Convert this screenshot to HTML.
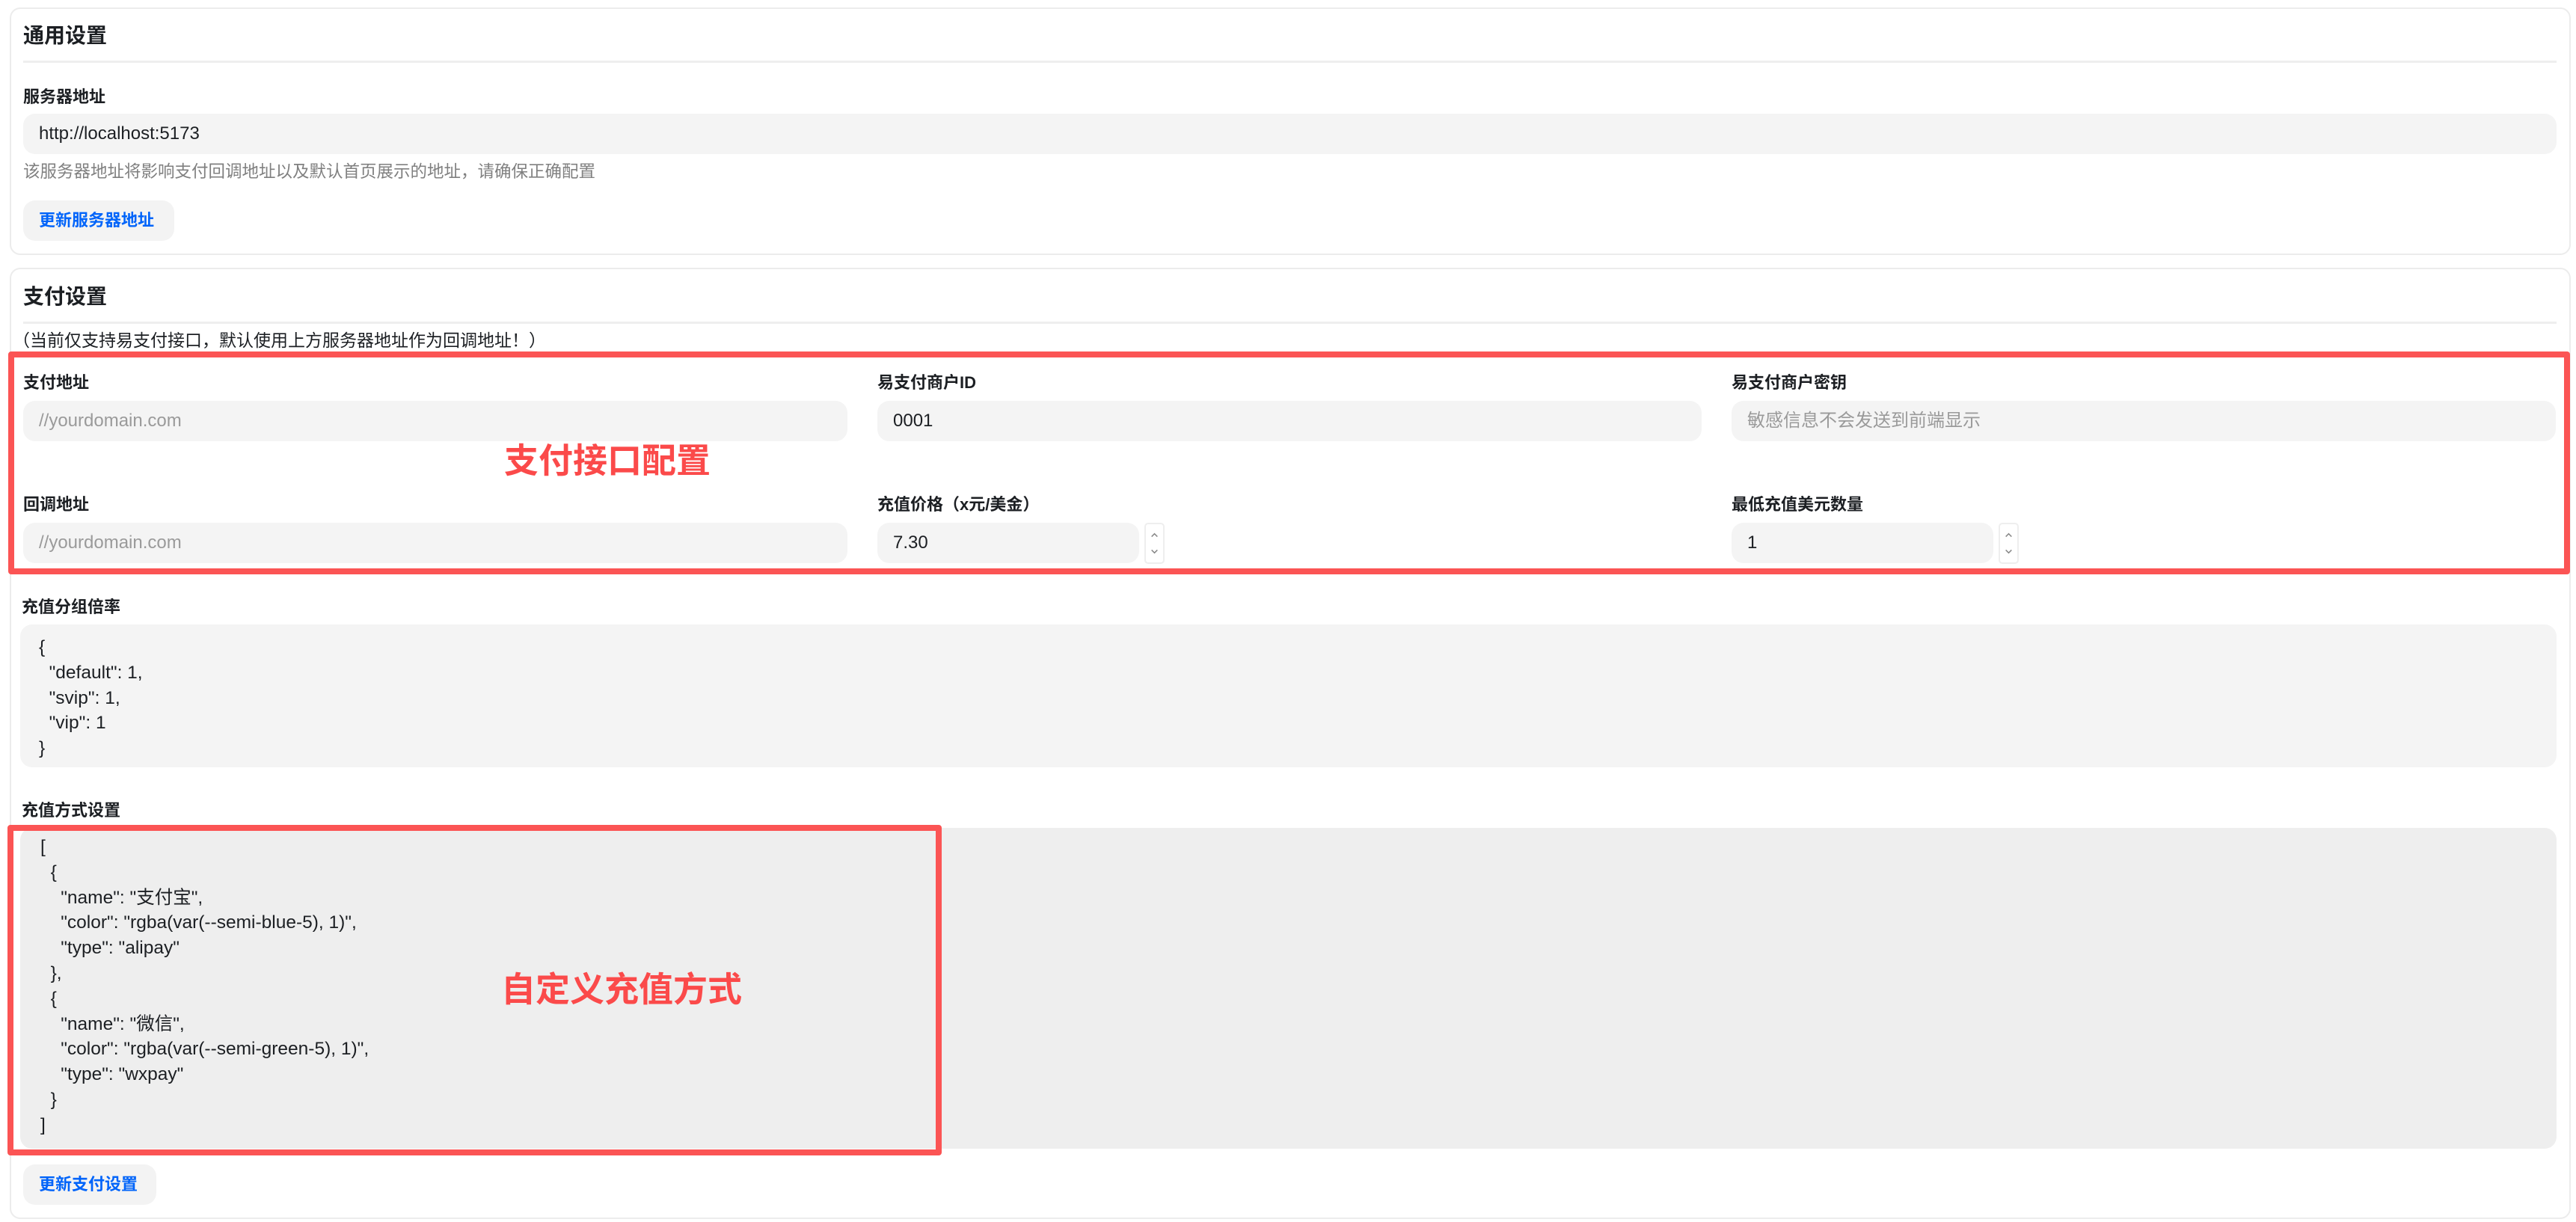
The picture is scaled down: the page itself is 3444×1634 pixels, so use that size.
<!DOCTYPE html>
<html><head><meta charset="utf-8"><style>
*{box-sizing:border-box;margin:0;padding:0}
body{width:3444px;height:1634px;background:#fff;font-family:"Liberation Sans","Noto Sans CJK SC",sans-serif;color:#1c1f23;position:relative;overflow:hidden}
.a{position:absolute}
.card{position:absolute;left:13px;width:3424px;border:2px solid #ececec;border-radius:14px;background:#fff}
.title{font-size:28px;font-weight:700;line-height:36px}
.div{height:3px;background:#eeeeee;width:3387px;left:31px}
.lbl{font-size:22px;font-weight:700;line-height:28px}
.inp{background:#f4f4f4;border-radius:16px;font-size:24px;line-height:54px;padding-left:21px;height:54px}
.ph{color:#9a9a9a}
.btn{background:#f3f3f3;border-radius:16px;color:#0064fa;font-weight:700;font-size:22px;line-height:54px;height:54px;padding-left:21px}
.red{border:8px solid #fb5454;border-radius:4px}
.rt{color:#fb4a4a;font-size:46px;line-height:50px;font-weight:700}
.code{font-size:24.5px;line-height:33.8px;white-space:pre}
.spin{border:2px solid #eee;border-radius:5px;width:27px;height:55px}
</style></head><body>
<div class="card" style="top:10px;height:331px"></div>
<div class="a title" style="left:31px;top:30px">通用设置</div>
<div class="a div" style="top:81px"></div>
<div class="a lbl" style="left:31px;top:116px">服务器地址</div>
<div class="a inp" style="left:31px;top:152px;width:3387px">http://localhost:5173</div>
<div class="a" style="left:31px;top:215px;font-size:22.5px;line-height:30px;color:#808080">该服务器地址将影响支付回调地址以及默认首页展示的地址，请确保正确配置</div>
<div class="a btn" style="left:31px;top:268px;width:202px">更新服务器地址</div>

<div class="card" style="top:358px;height:1272px"></div>
<div class="a title" style="left:31px;top:379px">支付设置</div>
<div class="a div" style="top:430px"></div>
<div class="a" style="left:17px;top:440px;font-size:23px;line-height:30px">（当前仅支持易支付接口，默认使用上方服务器地址作为回调地址！）</div>

<div class="a lbl" style="left:31px;top:498px">支付地址</div>
<div class="a lbl" style="left:1173px;top:498px">易支付商户ID</div>
<div class="a lbl" style="left:2315px;top:498px">易支付商户密钥</div>
<div class="a inp ph" style="left:31px;top:536px;width:1102px">//yourdomain.com</div>
<div class="a inp" style="left:1173px;top:536px;width:1102px">0001</div>
<div class="a inp ph" style="left:2315px;top:536px;width:1102px">敏感信息不会发送到前端显示</div>

<div class="a lbl" style="left:31px;top:661px">回调地址</div>
<div class="a lbl" style="left:1173px;top:661px">充值价格（x元/美金）</div>
<div class="a lbl" style="left:2315px;top:661px">最低充值美元数量</div>
<div class="a inp ph" style="left:31px;top:699px;width:1102px">//yourdomain.com</div>
<div class="a inp" style="left:1173px;top:699px;width:350px">7.30</div>
<svg class="a spin" style="left:1530px;top:699px" viewBox="0 0 27 55"><path d="M9 17 L13.5 12.5 L18 17 M9 38 L13.5 42.5 L18 38" fill="none" stroke="#888" stroke-width="1.8"/></svg>
<div class="a inp" style="left:2315px;top:699px;width:350px">1</div>
<svg class="a spin" style="left:2672px;top:699px" viewBox="0 0 27 55"><path d="M9 17 L13.5 12.5 L18 17 M9 38 L13.5 42.5 L18 38" fill="none" stroke="#888" stroke-width="1.8"/></svg>
<div class="a red" style="left:11px;top:470px;width:3425px;height:298px"></div>
<div class="a rt" style="left:674px;top:591px">支付接口配置</div>

<div class="a lbl" style="left:29px;top:798px">充值分组倍率</div>
<div class="a" style="left:27px;top:835px;width:3391px;height:191px;background:#f4f4f4;border-radius:16px"></div>
<div class="a code" style="left:52px;top:849px">{
  "default": 1,
  "svip": 1,
  "vip": 1
}</div>

<div class="a lbl" style="left:29px;top:1070px">充值方式设置</div>
<div class="a" style="left:27px;top:1107px;width:3391px;height:429px;background:#eeeeee;border-radius:16px"></div>
<div class="a code" style="left:54px;top:1116px">[
  {
    "name": "支付宝",
    "color": "rgba(var(--semi-blue-5), 1)",
    "type": "alipay"
  },
  {
    "name": "微信",
    "color": "rgba(var(--semi-green-5), 1)",
    "type": "wxpay"
  }
]</div>
<div class="a red" style="left:10px;top:1103px;width:1249px;height:442px"></div>
<div class="a rt" style="left:670px;top:1298px">自定义充值方式</div>
<div class="a btn" style="left:31px;top:1557px;width:178px">更新支付设置</div>
</body></html>
